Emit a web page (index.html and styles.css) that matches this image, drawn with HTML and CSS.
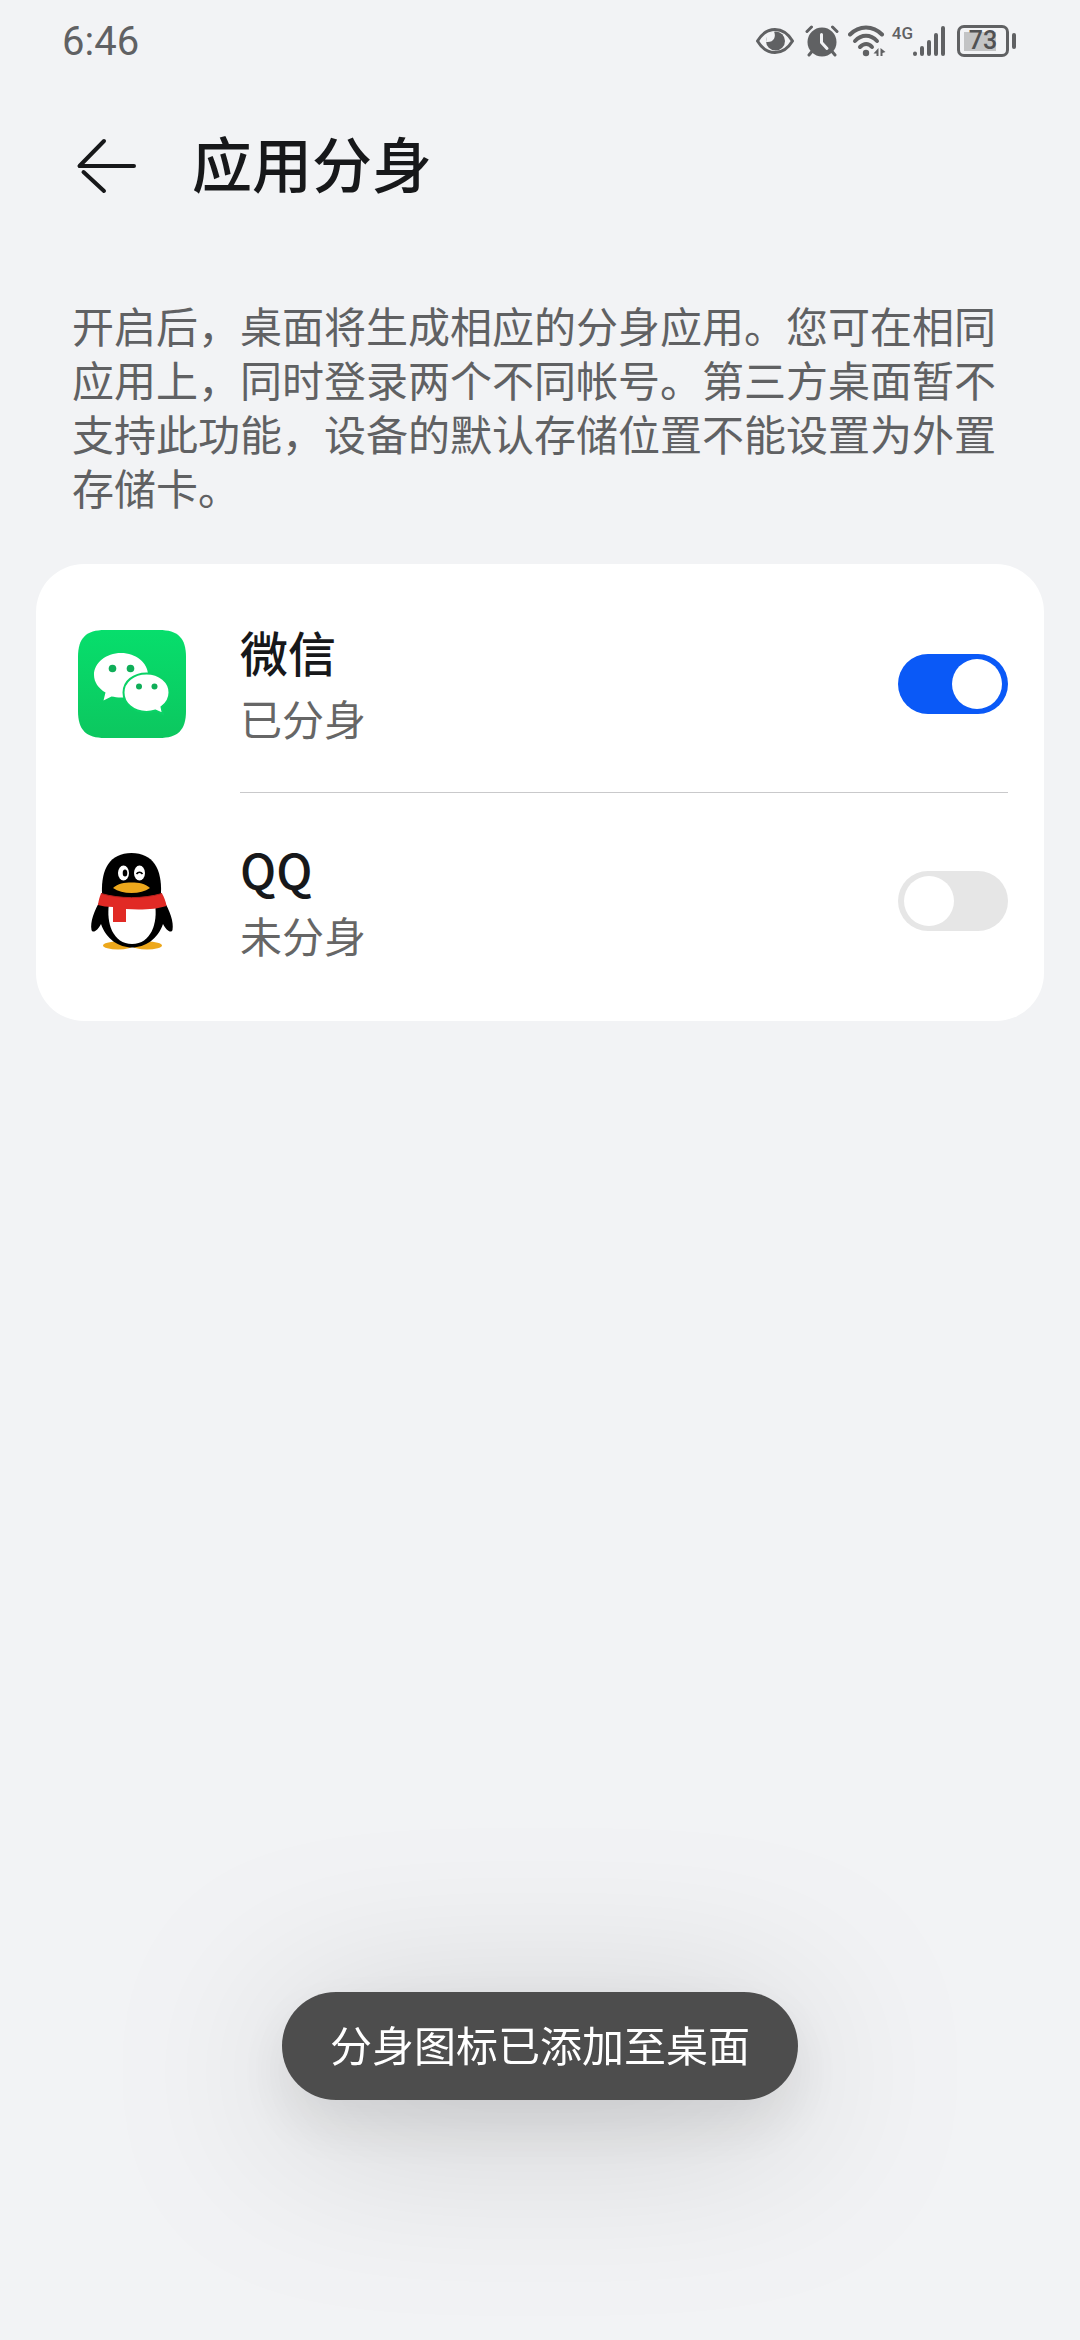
FILE: index.html
```html
<!DOCTYPE html>
<html lang="zh-CN">
<head>
  <meta charset="UTF-8" />
  <meta name="viewport" content="width=device-width, initial-scale=1.0"/>
  <title>应用分身</title>
  <link rel="stylesheet" href="styles.css">
</head>
<body>

  <div class="status-bar">
    <span class="time">6:46</span>
    <div class="status-icons">
      <svg class="eye" width="40" height="32" viewBox="0 0 40 32">
        <path d="M2.500 16C7 8.500 13 4.500 20 4.500S33 8.500 37.500 16C33 23.500 27 27.500 20 27.500S7 23.500 2.500 16Z" fill="none" stroke="#606163" stroke-width="3" stroke-linejoin="round"/>
        <circle cx="20.500" cy="16" r="9.500" fill="#606163"/>
        <path d="M12 10C14 8 17 6.500 19 6.500C21.500 12 18.500 18 11 17Z" fill="#f2f3f5"/>
      </svg>
      <svg class="alarm" width="34" height="32" viewBox="0 0 34 32">
        <circle cx="17" cy="17" r="14.500" fill="#606163"/>
        <path d="M2 6.500L6.500 2M32 6.500L27.500 2M6.500 27L4 30M27.500 27L30 30" fill="none" stroke="#606163" stroke-width="3" stroke-linecap="round"/>
        <path d="M16.500 9.500v8l5.500 6" fill="none" stroke="#f2f3f5" stroke-width="3" stroke-linecap="round" stroke-linejoin="round"/>
      </svg>
      <svg class="wifi" width="38" height="32" viewBox="0 0 38 32">
        <g fill="none" stroke="#606163" stroke-width="4" stroke-linecap="round">
          <path d="M2 9.500C11 0 25 0 34 9.500"/>
          <path d="M7 16C13.500 9 22.500 9 29 16"/>
          <path d="M12 22C16 18 20.500 18 24 22"/>
        </g>
        <circle cx="18" cy="28" r="3.200" fill="#606163"/>
        <path d="M30.500 23v8h-2v-2.500h-3zM32.500 23l5 4l-3 1v3h-2z" fill="#606163"/>
      </svg>
      <span class="network">4G</span>
      <svg class="signal" width="32" height="32" viewBox="0 0 32 32">
        <path d="M2 28.500v.500M9 23v6M16 17v12M23 10v19M30 3v26" fill="none" stroke="#606163" stroke-width="4" stroke-linecap="round"/>
      </svg>
      <span class="battery">73</span>
    </div>
  </div>

  <header>
    <button class="back" type="button" aria-label="返回">
      <svg width="60" height="56" viewBox="0 0 60 56">
        <path d="M28 3L3.500 28H58M7.500 34L28 53" fill="none" stroke="#17181a" stroke-width="4" stroke-linecap="round" stroke-linejoin="round"/>
      </svg>
    </button>
    <h1>应用分身</h1>
  </header>

  <main>
    <p class="intro">开启后，桌面将生成相应的分身应用。您可在相同应用上，同时登录两个不同帐号。第三方桌面暂不支持此功能，设备的默认存储位置不能设置为外置存储卡。</p>

    <div class="card">
      <div class="row">
        <svg class="app-icon" viewBox="0 0 108 108">
          <defs>
            <linearGradient id="green" x1="0" y1="0" x2="0" y2="1">
              <stop offset="0" stop-color="#07de6c"/>
              <stop offset="1" stop-color="#0cc75f"/>
            </linearGradient>
          </defs>
          <path d="M27 0H81C100 0 108 8 108 27V81C108 100 100 108 81 108H27C8 108 0 100 0 81V27C0 8 8 0 27 0Z" fill="url(#green)"/>
          <path d="M43 23C58 23 70 33 70 45S58 67.500 43 67.500C39.500 67.500 36.500 67 33.500 66.500L25.500 70.500L27.500 62.500C20.500 58.500 16 52 16 45C16 33 28 23 43 23Z" fill="#fff"/>
          <path d="M68.500 43.500C81.500 43.500 91.500 52 91.500 62.500C91.500 68.500 88.500 73.500 83.500 77L85 84L77.500 80.500C74.500 81.500 71.500 82 68.500 82C55.500 82 45.500 73.500 45.500 62.500S55.500 43.500 68.500 43.500Z" fill="#fff" stroke="#0bd266" stroke-width="2"/>
          <g fill="#0fae58">
            <circle cx="34.500" cy="38.500" r="3.800"/>
            <circle cx="52.500" cy="38.500" r="3.800"/>
            <circle cx="61" cy="56.500" r="3"/>
            <circle cx="76.500" cy="56.500" r="3"/>
          </g>
        </svg>
        <label class="info" for="wechat">
          <span class="name">微信</span>
          <span class="state">已分身</span>
        </label>
        <input class="switch" type="checkbox" role="switch" id="wechat" checked>
      </div>

      <div class="row">
        <svg class="app-icon" viewBox="-7 0 108 108">
          <ellipse cx="33" cy="98.500" rx="15" ry="4" fill="#eda81c"/>
          <ellipse cx="62" cy="98.500" rx="15" ry="4" fill="#eda81c"/>
          <path d="M16 52C9 64 5 75 6.500 83C8 87 13 83 16 77C21 92 34 100.500 47 100.500S73 92 78 77C81 83 86 87 87.500 83C89 75 85 64 78 52Z" fill="#000"/>
          <path d="M17 46C16 22 25 6 46.500 6S77 22 76 46L74 60H19Z" fill="#000"/>
          <path d="M24 57H70C73 76 66 97 47 97S21 76 24 57Z" fill="#fff"/>
          <path d="M16 46.500C35 52 58 52 77 46.500C79 50 81 55 81.500 59C71 62.500 55 63 41 62V75H28V60C22 60 17 59 13 58C13.500 54 14.500 50 16 46.500Z" fill="#e12a25"/>
          <path d="M16 46.500C35 52 58 52 77 46.500" fill="none" stroke="#b3211d" stroke-width="1"/>
          <ellipse cx="38.500" cy="26" rx="5.500" ry="7.500" fill="#fff"/>
          <ellipse cx="54.500" cy="26" rx="5.500" ry="7.500" fill="#fff"/>
          <ellipse cx="40" cy="26" rx="2.300" ry="3.500" fill="#000"/>
          <path d="M51.500 27C53 24.500 56 24.500 57.500 27" fill="none" stroke="#000" stroke-width="1.500"/>
          <path d="M28 41C33 36.500 39 35.500 46.500 35.500S60 36.500 65 41C60 44.500 54 46 46.500 46S33 44.500 28 41Z" fill="#eda81c"/>
        </svg>
        <label class="info" for="qq">
          <span class="name">QQ</span>
          <span class="state">未分身</span>
        </label>
        <input class="switch" type="checkbox" role="switch" id="qq">
      </div>
    </div>
  </main>

  <div class="toast" role="status">分身图标已添加至桌面</div>

</body>
</html>
```
FILE: styles.css
```css
* {
  box-sizing: border-box;
}

body {
  margin: 0;
  min-height: 100vh;
  background: #f2f3f5;
  font-family: "Noto Sans CJK SC", sans-serif;
  color: #17181a;
}

.status-bar {
  display: flex;
  align-items: center;
  justify-content: space-between;
  height: 82px;
  padding: 0 64px 0 62px;
  font-family: Roboto, sans-serif;
  font-weight: 500;
  color: #606163;
}

.time {
  font-size: 40px;
  font-weight: 400;
}

.status-icons {
  display: flex;
  align-items: center;
}

.alarm {
  margin-left: 10px;
}

.wifi {
  margin-left: 9px;
}

.network {
  align-self: flex-start;
  margin-left: 6px;
  font-size: 17px;
  line-height: 16px;
}

.battery {
  position: relative;
  width: 52px;
  margin: 0 7px 0 12px;
  border: 3px solid #606163;
  border-radius: 7px;
  background: linear-gradient(#c3c4c5, #c3c4c5) 4px center / 32px 19px no-repeat;
  font-size: 25px;
  line-height: 26px;
  text-align: center;
  color: #505153;
}

/* battery tip */
.battery::after {
  content: "";
  position: absolute;
  top: 5px;
  right: -10px;
  width: 4px;
  height: 16px;
  border-radius: 2px;
  background: #606163;
}

header {
  display: flex;
  align-items: center;
  height: 168px;
  padding: 0 76px;
  gap: 56px;
}

.back {
  display: flex;
  padding: 0;
  border: none;
  background: none;
  cursor: pointer;
}

h1 {
  margin: 0;
  padding-bottom: 8px;
  font-size: 60px;
  font-weight: 500;
  line-height: 80px;
}

.intro {
  margin: 0;
  padding: 48px 72px;
  font-size: 42px;
  line-height: 54px;
  color: #606163;
}

.card {
  margin: 2px 36px 0;
  padding: 12px 36px 12px 42px;
  border-radius: 48px;
  background: #fff;
}

.row {
  display: flex;
  align-items: center;
}

.app-icon {
  width: 108px;
  height: 108px;
  margin-right: 54px;
}

.info {
  flex: 1;
  display: flex;
  flex-direction: column;
  padding: 40px 0 42px;
}

.name {
  font-size: 48px;
  font-weight: 500;
  line-height: 70px;
}

.state {
  font-size: 42px;
  line-height: 64px;
  color: #666;
}

/* the divider starts at the text, not at the icon */
.row + .row {
  border-top: 1px solid transparent;
  background: linear-gradient(#c9c9cb, #c9c9cb) right top / calc(100% - 162px) 1px no-repeat border-box;
}

.switch {
  appearance: none;
  width: 110px;
  height: 60px;
  margin: 0;
  padding: 5px 6px;
  border-radius: 30px;
  background: #e6e6e6;
  display: flex;
  cursor: pointer;
}

.switch::before {
  content: "";
  width: 50px;
  height: 50px;
  border-radius: 50%;
  background: #fff;
}

.switch:checked {
  background: #0a59f7;
  justify-content: flex-end;
}

.toast {
  position: fixed;
  bottom: 240px;
  left: 50%;
  transform: translateX(-50%);
  padding: 22px 48px 26px;
  border-radius: 54px;
  background: #4d4d4d;
  font-size: 42px;
  line-height: 60px;
  white-space: nowrap;
  color: #fff;
  box-shadow: 0 24px 60px rgba(0, 0, 0, 0.09);
  filter: drop-shadow(0 24px 90px rgba(0, 0, 0, 0.18));
}
```
